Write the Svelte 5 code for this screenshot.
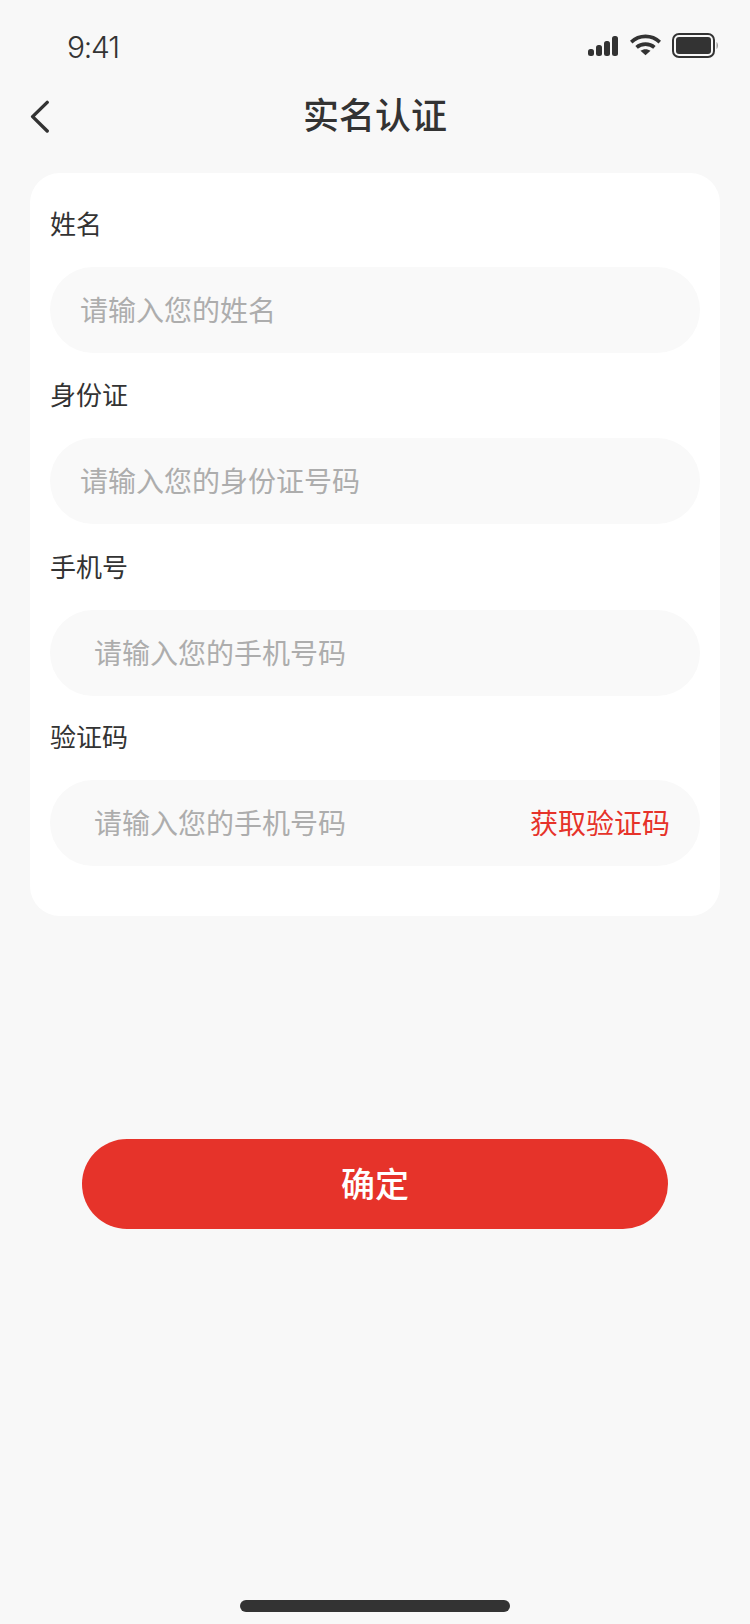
<script>
  const fields = [
    { label: '姓名', placeholder: '请输入您的姓名' },
    { label: '身份证', placeholder: '请输入您的身份证号码' },
    { label: '手机号', placeholder: '请输入您的手机号码', inset: true },
    { label: '验证码', placeholder: '请输入您的手机号码', inset: true, action: '获取验证码' }
  ];
</script>

<div class="page">
  <div class="status">
    <span class="time">9:41</span>
    <div class="status-icons">
      <svg class="signal" width="30" height="20" viewBox="0 0 30 20" fill="#333">
        <rect x="0" y="13" width="6" height="7" rx="2.5" />
        <rect x="8" y="9" width="6" height="11" rx="2.5" />
        <rect x="16" y="5" width="6" height="15" rx="2.5" />
        <rect x="24" y="0" width="6" height="20" rx="2.5" />
      </svg>
      <svg class="wifi" width="31" height="22" viewBox="0 0 32 22" fill="none">
        <path d="M1.2 8C9.5 0.2 22.5 0.2 30.8 8" stroke="#333" stroke-width="3.8" />
        <path d="M6.8 13.4C11.8 9 20.2 9 25.2 13.4" stroke="#333" stroke-width="3.8" />
        <path d="M16 21.6L10.8 17C13.8 14.8 18.2 14.8 21.2 17Z" fill="#333" />
      </svg>
      <svg class="battery" width="46" height="25" viewBox="0 0 46 25" fill="none">
        <rect x="1" y="1" width="41" height="23" rx="6" stroke="#333" stroke-width="2" />
        <rect x="4" y="4" width="35" height="17" rx="3" fill="#333" />
        <path d="M44.5 9C45.4 9.5 46 11 46 12.5C46 14 45.4 15.5 44.5 16Z" fill="#999" />
      </svg>
    </div>
  </div>

  <header class="nav">
    <svg class="back" width="20" height="34" viewBox="0 0 20 34" fill="none">
      <path d="M17.2 2.4L2.6 16.6L17.2 31" stroke="#333" stroke-width="3.4" stroke-linecap="round" stroke-linejoin="round" />
    </svg>
    <h1>实名认证</h1>
  </header>

  <main class="card">
    {#each fields as f}
      <div class="field">
        <div class="label">{f.label}</div>
        <div class="input" class:inset={f.inset}>
          <span class="placeholder">{f.placeholder}</span>
          {#if f.action}<span class="action">{f.action}</span>{/if}
        </div>
      </div>
    {/each}
  </main>

  <button class="submit">确定</button>

  <div class="home"></div>
</div>

<style>
  :global(body) {
    margin: 0;
    background: #f8f8f8;
  }
  .page {
    width: 750px;
    height: 1624px;
    display: flex;
    flex-direction: column;
    background: #f8f8f8;
    font-family: "Noto Sans CJK SC", "Noto Sans", sans-serif;
    color: #333;
  }
  .status {
    height: 88px;
    display: flex;
    justify-content: space-between;
    align-items: flex-start;
    padding: 0 32px 0 67px;
    box-sizing: border-box;
    flex: none;
  }
  .time {
    font-family: "Inter", "Liberation Sans", sans-serif;
    font-size: 30px;
    font-weight: 300;
    line-height: 30px;
    letter-spacing: -1.2px;
    margin-top: 32px;
    color: #333;
  }
  .status-icons {
    display: flex;
    align-items: flex-start;
    margin-top: 33px;
  }
  .signal { margin: 3px 12px 0 0; }
  .wifi { margin: 1px 11px 0 0; }
  .nav {
    height: 60px;
    position: relative;
    display: flex;
    align-items: center;
    justify-content: center;
    flex: none;
  }
  .back {
    position: absolute;
    left: 30px;
    top: 12px;
  }
  h1 {
    margin: 0;
    font-size: 36px;
    font-weight: 500;
    line-height: 50px;
    padding-bottom: 10px;
    color: #333;
  }
  .card {
    margin: 25px 30px 0;
    padding: 34px 20px 25px;
    background: #fff;
    border-radius: 30px;
    flex: none;
  }
  .field {
    margin-bottom: 25px;
  }
  .field:nth-child(2) {
    margin-bottom: 26px;
  }
  .field:nth-child(3) {
    margin-bottom: 24px;
  }
  .label {
    height: 36px;
    line-height: 32px;
    font-size: 26px;
    margin-bottom: 24px;
    color: #333;
  }
  .input {
    height: 86px;
    border-radius: 43px;
    background: #f9f9f9;
    display: flex;
    align-items: center;
    justify-content: space-between;
    padding: 0 30px 2px 30px;
    box-sizing: border-box;
    font-size: 28px;
  }
  .input.inset {
    padding-left: 44px;
  }
  .placeholder {
    color: #adadad;
  }
  .action {
    color: #e6332a;
  }
  .submit {
    display: block;
    margin: 223px 82px 0;
    width: 586px;
    height: 90px;
    border: 0;
    border-radius: 45px;
    background: #e6332a;
    color: #fff;
    font-family: inherit;
    font-size: 34px;
    font-weight: 500;
    padding: 0 0 4px;
    flex: none;
  }
  .home {
    width: 270px;
    height: 12px;
    border-radius: 6px;
    background: #333;
    margin: auto auto 12px;
    flex: none;
  }
</style>
